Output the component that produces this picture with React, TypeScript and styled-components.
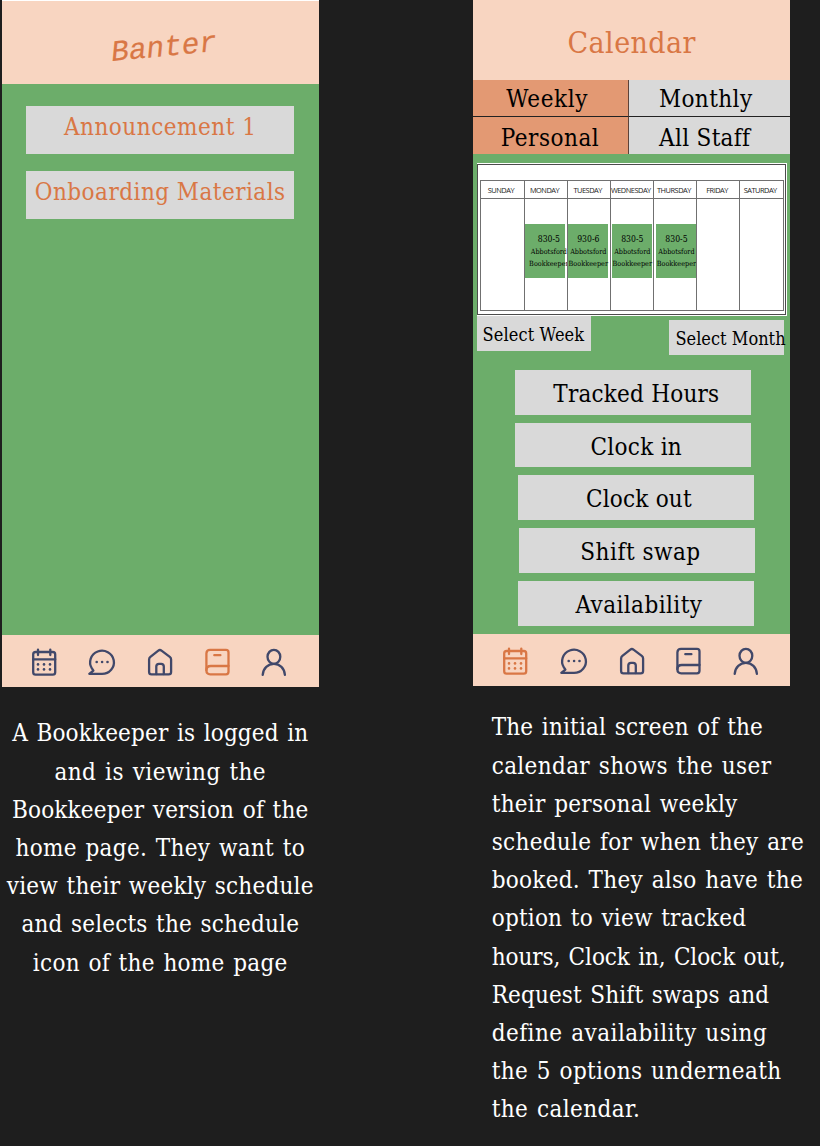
import React from 'react';
import styled, { createGlobalStyle } from 'styled-components';

const color = {
  ink: '#1e1e1e',
  peach: '#f8d5c1',
  green: '#6cad6a',
  grey: '#d9d9d9',
  orange: '#d97745',
  selected: '#e39973',
  navy: '#41486a',
};

const GlobalStyle = createGlobalStyle`
  * { box-sizing: border-box; }
  body {
    margin: 0;
    background: ${color.ink};
    font-family: 'DejaVu Serif Condensed', 'DejaVu Serif', serif;
    font-stretch: condensed;
    font-size: 24px;
    color: #000;
  }
`;

const Board = styled.main`
  display: flex;
  width: 820px;
  height: 1146px;
  overflow: hidden;
`;

const Column = styled.section<{ $width: number; $indent: number }>`
  flex: none;
  width: ${(p) => p.$width}px;
  padding-left: ${(p) => p.$indent}px;
`;

const Phone = styled.article<{ $height: number }>`
  display: flex;
  flex-direction: column;
  width: 317.4px;
  height: ${(p) => p.$height}px;
  background: ${color.green};
`;

const Label = styled.span<{ $spacing?: number }>`
  white-space: nowrap;
  letter-spacing: ${(p) => p.$spacing ?? 0}px;
`;

const BrandHeader = styled.header`
  display: flex;
  flex: none;
  justify-content: center;
  height: 83.5px;
  padding: 30px 0 0 8px;
  border-top: 1px solid #fff;
  background: ${color.peach};
`;

const Brand = styled.h1`
  margin: 0;
  height: 34px;
  font: italic 400 29.5px/34px 'Liberation Mono', monospace;
  color: ${color.orange};
  -webkit-text-stroke: 0.2px ${color.orange};
  transform: rotate(-5.5deg);
`;

const TitleHeader = styled.header`
  flex: none;
  height: 80px;
  background: ${color.peach};
`;

const Title = styled.h1`
  margin: 0;
  font-size: 30px;
  font-weight: 400;
  line-height: 85px;
  text-align: center;
  color: ${color.orange};
`;

const Feed = styled.div`
  display: flex;
  flex: 1;
  flex-direction: column;
  gap: 16.3px;
  padding: 22.3px 24.5px;
`;

const FeedCard = styled.div`
  height: 48.7px;
  background: ${color.grey};
  color: ${color.orange};
  line-height: 42px;
  text-align: center;
`;

const Nav = styled.nav`
  display: flex;
  flex: none;
  justify-content: space-between;
  height: 52px;
  padding: 13px 30.5px 0 28.3px;
  background: ${color.peach};
`;

const Icon = styled.svg<{ $active?: boolean }>`
  width: 28px;
  height: 28px;
  overflow: visible;
  fill: none;
  stroke: ${(p) => (p.$active ? color.orange : color.navy)};
  stroke-width: 2.3;
  stroke-linecap: round;
  stroke-linejoin: round;

  .dot {
    fill: ${(p) => (p.$active ? color.orange : color.navy)};
    stroke: none;
  }
`;

const Tabs = styled.div`
  display: grid;
  flex: none;
  grid-template: 37.4px 36.8px / 155.6px 1fr;
`;

const Tab = styled.div<{ $selected?: boolean; $shift: number }>`
  display: flex;
  justify-content: center;
  line-height: 39px;
  padding-right: ${(p) => p.$shift}px;
  background: ${(p) => (p.$selected ? color.selected : color.grey)};

  &:nth-child(odd) { border-right: 1px solid #5d4238; }
  &:nth-child(-n + 2) { border-bottom: 1px solid #222; }
  &:nth-child(n + 3) { line-height: 43px; }
`;

const Body = styled.div`
  flex: 1;
  padding: 8.4px 3.6px 0;
`;

const Week = styled.div`
  width: 310px;
  height: 153px;
  padding: 1px 1px 1px 0.4px;
  background: #fff;
`;

const WeekFrame = styled.div`
  height: 151.3px;
  padding: 15.6px 2px 3px 1.6px;
  border: 1px solid #4c4c4c;
`;

const Days = styled.div`
  display: grid;
  grid-template-columns: repeat(7, 1fr);
  height: 131px;
  width: 304px;
  border: 1px solid #707070;
`;

const Day = styled.div`
  min-width: 0;
  & + & { border-left: 1px solid #707070; }
`;

const DayName = styled.div`
  display: flex;
  justify-content: center;
  height: 17px;
  margin-left: -7px;
  margin-right: -4.5px;
  font: 400 7.4px/18px 'Open Sans', 'Noto Sans', sans-serif;
  letter-spacing: -0.48px;
  color: #222;
`;

const DayHead = styled.div`
  border-bottom: 1px solid #707070;
`;

const Shift = styled.div<{ $offset: number; $textShift: number }>`
  display: flex;
  flex-direction: column;
  align-items: center;
  width: 40.3px;
  height: 54.3px;
  margin: 24.5px 0 0 ${(p) => p.$offset}px;
  padding: 9.5px 0 0 ${(p) => p.$textShift}px;
  background: ${color.green};
  font-size: 7.2px;
  line-height: 12px;
`;

const Hours = styled.div`
  font-size: 8.6px;
  line-height: 12.5px;
`;

const Pickers = styled.div`
  display: flex;
  justify-content: space-between;
  width: 307.5px;
`;

const Picker = styled.div<{ $drop?: number }>`
  width: 114.7px;
  height: 35.7px;
  margin-top: ${(p) => p.$drop ?? 0}px;
  padding-left: 6px;
  background: ${color.grey};
  font-size: 18px;
  line-height: 38.5px;
`;

const Actions = styled.div`
  display: flex;
  flex-direction: column;
  gap: 8.1px;
  padding: 14.6px 0 0 38.4px;
`;

const Action = styled.div<{ $indent?: number }>`
  width: 236.3px;
  height: 44.7px;
  margin-left: ${(p) => p.$indent ?? 0}px;
  padding-left: 6.4px;
  background: ${color.grey};
  line-height: 48px;
  text-align: center;
`;

const Caption = styled.p<{ $centered?: boolean }>`
  display: flex;
  flex-direction: column;
  align-items: ${(p) => (p.$centered ? 'center' : 'flex-start')};
  width: 317.5px;
  margin: ${(p) => (p.$centered ? '27.3px 0 0' : '22.3px 0 0 18.7px')};
  color: #fff;
  line-height: 38.2px;
  word-spacing: 1.5px;
`;

const DOTS = [8, 14, 20];

function BottomNav({ active }: { active: 'calendar' | 'journal' }) {
  return (
    <Nav>
      <Icon viewBox="0 0 28 28" $active={active === 'calendar'}>
        <rect x="3.2" y="4" width="22" height="22.6" rx="2.4" />
        <path d="M3.2 11.3H25.2M8 1.6V7M20.3 1.6V7" />
        {DOTS.map((x) => (
          <React.Fragment key={x}>
            <circle className="dot" cx={x} cy="16.4" r="1.3" />
            <circle className="dot" cx={x} cy="21.4" r="1.3" />
          </React.Fragment>
        ))}
      </Icon>
      <Icon viewBox="0 0 28 28">
        <path d="M15 25.9A11.9 11.6 0 1 0 4.9 20.4L6.4 22.6L2.3 25.9Z" />
        <circle className="dot" cx="9.7" cy="14" r="1.3" />
        <circle className="dot" cx="15.1" cy="14" r="1.3" />
        <circle className="dot" cx="20.5" cy="14" r="1.3" />
      </Icon>
      <Icon viewBox="0 0 28 28">
        <path d="M4.1 11.6Q4.1 10 5.4 8.9L13.3 2.6Q14.9 1.4 16.5 2.6L24.8 8.9Q26.1 10 26.1 11.6V23.9Q26.1 26.3 23.7 26.3H6.5Q4.1 26.3 4.1 23.9Z" />
        <path d="M11.3 26V18.6Q11.3 15.9 14 15.9H16.1Q18.8 15.9 18.8 18.6V26" />
      </Icon>
      <Icon viewBox="0 0 28 28" $active={active === 'journal'}>
        <path d="M7 1.9H23Q25.5 1.9 25.5 4.4V23.8Q25.5 26.3 23 26.3H7.2Q3.4 26.3 3.4 22.3V5.5Q3.4 1.9 7 1.9Z" />
        <path d="M25.5 18H7.8Q3.4 18 3.4 22.3M11.3 7.2H17.4" />
      </Icon>
      <Icon viewBox="0 0 28 28">
        <ellipse cx="13.9" cy="8.8" rx="6.4" ry="7" />
        <path d="M2.7 26.8C3.2 20.2 8 15.8 13.9 15.8S24.4 20.2 24.9 26.8" />
      </Icon>
    </Nav>
  );
}

type Line = [text: string, spacing: number];

const storyLines: Line[] = [
  ['A Bookkeeper is logged in', 0.15],
  ['and is viewing the', 0.42],
  ['Bookkeeper version of the', 0.18],
  ['home page. They want to', 0.3],
  ['view their weekly schedule', 0.21],
  ['and selects the schedule', 0.17],
  ['icon of the home page', 0.27],
];

const calendarLines: Line[] = [
  ['The initial screen of the', 0.18],
  ['calendar shows the user', 0.35],
  ['their personal weekly', 0.27],
  ['schedule for when they are', 0.3],
  ['booked. They also have the', 0.28],
  ['option to view tracked', 0.21],
  ['hours, Clock in, Clock out,', -0.07],
  ['Request Shift swaps and', 0.13],
  ['define availability using', 0.44],
  ['the 5 options underneath', 0.35],
  ['the calendar.', 0.4],
];

const week: { name: string; hours?: string; offset?: number; textShift?: number }[] = [
  { name: 'SUNDAY' },
  { name: 'MONDAY', hours: '830-5', offset: 0, textShift: 8 },
  { name: 'TUESDAY', hours: '930-6', offset: 0.3, textShift: 0 },
  { name: 'WEDNESDAY', hours: '830-5', offset: 1.2, textShift: 0 },
  { name: 'THURSDAY', hours: '830-5', offset: 1.7, textShift: 1 },
  { name: 'FRIDAY' },
  { name: 'SATURDAY' },
];

const actions: { text: string; spacing: number; indent: number }[] = [
  { text: 'Tracked Hours', spacing: 0.2, indent: 0 },
  { text: 'Clock in', spacing: 0.28, indent: 0 },
  { text: 'Clock out', spacing: 0.21, indent: 2.6 },
  { text: 'Shift swap', spacing: 0.5, indent: 4.2 },
  { text: 'Availability', spacing: 0.43, indent: 2.6 },
];

const Lines = ({ lines }: { lines: Line[] }) => (
  <>
    {lines.map(([text, spacing]) => (
      <Label key={text} $spacing={spacing}>{text}</Label>
    ))}
  </>
);

export default function App() {
  return (
    <>
      <GlobalStyle />
      <Board>
        <Column $width={473} $indent={1.5}>
          <Phone $height={687}>
            <BrandHeader>
              <Brand>Banter</Brand>
            </BrandHeader>
            <Feed>
              <FeedCard><Label $spacing={0.5}>Announcement 1</Label></FeedCard>
              <FeedCard><Label $spacing={0.47}>Onboarding Materials</Label></FeedCard>
            </Feed>
            <BottomNav active="journal" />
          </Phone>
          <Caption $centered><Lines lines={storyLines} /></Caption>
        </Column>
        <Column $width={347} $indent={0}>
          <Phone $height={686}>
            <TitleHeader>
              <Title><Label $spacing={0.42}>Calendar</Label></Title>
            </TitleHeader>
            <Tabs>
              <Tab $selected $shift={6}><Label $spacing={0.65}>Weekly</Label></Tab>
              <Tab $shift={7.5}><Label $spacing={0.42}>Monthly</Label></Tab>
              <Tab $selected $shift={0.5}><Label $spacing={0.51}>Personal</Label></Tab>
              <Tab $shift={9.5}><Label $spacing={0.3}>All Staff</Label></Tab>
            </Tabs>
            <Body>
              <Week>
                <WeekFrame>
                  <Days>
                    {week.map((day) => (
                      <Day key={day.name}>
                        <DayHead><DayName>{day.name}</DayName></DayHead>
                        {day.hours && (
                          <Shift $offset={day.offset ?? 0} $textShift={day.textShift ?? 0}>
                            <Hours>{day.hours}</Hours>
                            <Label>Abbotsford</Label>
                            <Label $spacing={0.05}>Bookkeeper</Label>
                          </Shift>
                        )}
                      </Day>
                    ))}
                  </Days>
                </WeekFrame>
              </Week>
              <Pickers>
                <Picker><Label $spacing={0.12}>Select Week</Label></Picker>
                <Picker $drop={4}><Label $spacing={0.03}>Select Month</Label></Picker>
              </Pickers>
              <Actions>
                {actions.map((a) => (
                  <Action key={a.text} $indent={a.indent}>
                    <Label $spacing={a.spacing}>{a.text}</Label>
                  </Action>
                ))}
              </Actions>
            </Body>
            <BottomNav active="calendar" />
          </Phone>
          <Caption><Lines lines={calendarLines} /></Caption>
        </Column>
      </Board>
    </>
  );
}
